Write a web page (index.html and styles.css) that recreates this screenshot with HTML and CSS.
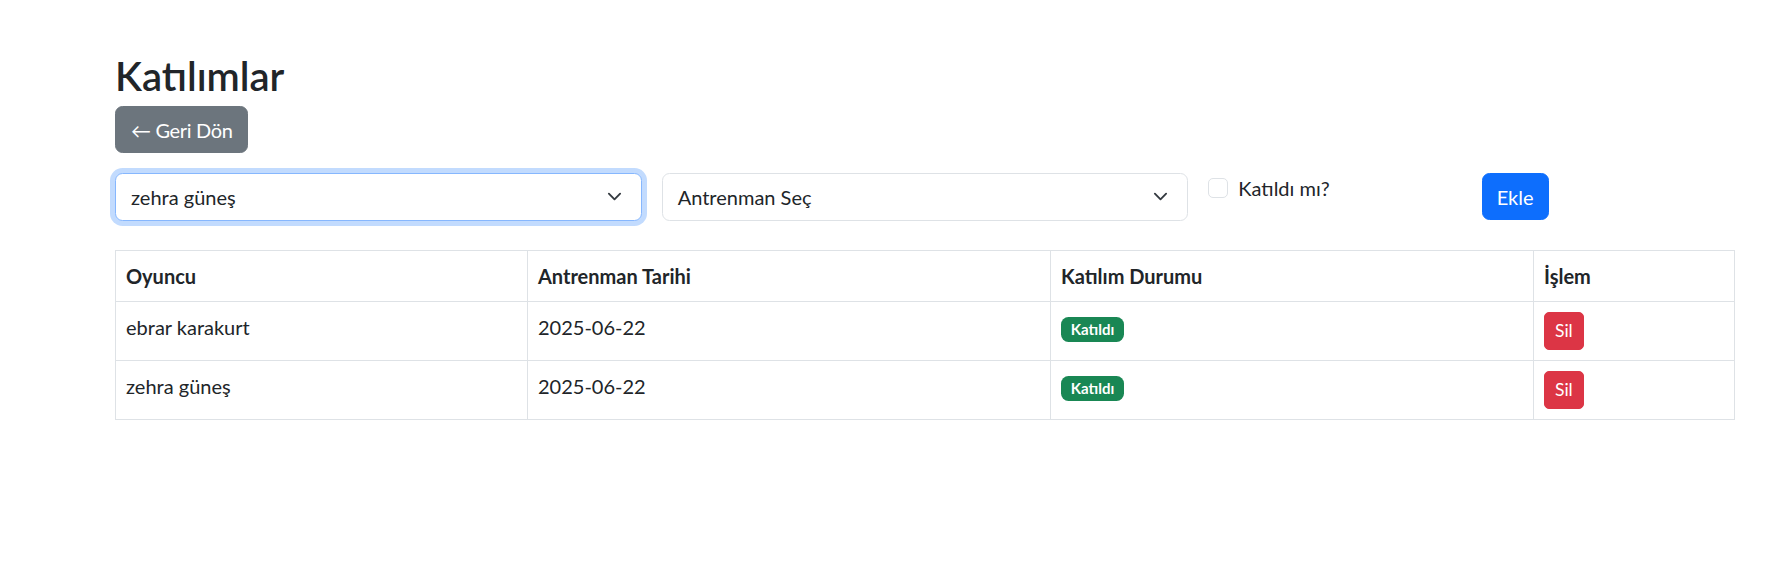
FILE: index.html
```html
<!DOCTYPE html>
<html lang="tr">
<head>
<meta charset="utf-8">
<title>Katılımlar</title>
<link rel="stylesheet" href="styles.css">
</head>
<body>
<div class="page">
  <h2 class="title">Katılımlar</h2>
  <a class="btn btn-secondary" href="#">← Geri Dön</a>

  <div class="form-row">
    <div class="col col-4">
      <div class="select is-focused">
        <span>zehra güneş</span>
        <svg class="chevron" viewBox="0 0 16 16" width="15" height="15"><path fill="none" stroke="#343a40" stroke-linecap="round" stroke-linejoin="round" stroke-width="2" d="m2 5 6 6 6-6"/></svg>
      </div>
    </div>
    <div class="col col-4">
      <div class="select">
        <span>Antrenman Seç</span>
        <svg class="chevron" viewBox="0 0 16 16" width="15" height="15"><path fill="none" stroke="#343a40" stroke-linecap="round" stroke-linejoin="round" stroke-width="2" d="m2 5 6 6 6-6"/></svg>
      </div>
    </div>
    <div class="col col-2">
      <label class="check">
        <span class="check-box"></span>
        <span class="check-label">Katıldı mı?</span>
      </label>
    </div>
    <div class="col col-2">
      <button class="btn btn-primary btn-add" type="button">Ekle</button>
    </div>
  </div>

  <table class="table">
    <thead>
      <tr>
        <th class="w-player">Oyuncu</th>
        <th class="w-date">Antrenman Tarihi</th>
        <th class="w-status">Katılım Durumu</th>
        <th>İşlem</th>
      </tr>
    </thead>
    <tbody>
      <tr>
        <td>ebrar karakurt</td>
        <td>2025-06-22</td>
        <td><span class="badge">Katıldı</span></td>
        <td><button class="btn btn-danger btn-sm" type="button">Sil</button></td>
      </tr>
      <tr>
        <td>zehra güneş</td>
        <td>2025-06-22</td>
        <td><span class="badge">Katıldı</span></td>
        <td><button class="btn btn-danger btn-sm" type="button">Sil</button></td>
      </tr>
    </tbody>
  </table>
</div>
</body>
</html>
```

FILE: styles.css
```css
* {
  box-sizing: border-box;
}

body {
  margin: 0;
  background: #fff;
  color: #212529;
  font-family: Lato, "Noto Sans", "Liberation Sans", sans-serif;
  font-size: 20px;
  line-height: 30px;
}

.page {
  padding: 52px 56px 0 115px;
}

.title {
  margin: 0 0 6px;
  font-size: 40px;
  font-weight: 600;
  line-height: 48px;
}

.btn {
  display: inline-block;
  padding: 7.5px 15px;
  border: 1.25px solid transparent;
  border-radius: 7.5px;
  font-family: inherit;
  font-size: 20px;
  line-height: 30px;
  color: #fff;
  text-decoration: none;
  cursor: pointer;
  vertical-align: middle;
}

.btn-secondary {
  background: #6c757d;
  border-color: #6c757d;
  letter-spacing: -0.35px;
}

.btn-primary {
  background: #0d6efd;
  border-color: #0d6efd;
}

.btn-add {
  padding: 7.5px 14px;
}

.btn-danger {
  background: #dc3545;
  border-color: #dc3545;
}

.btn-sm {
  padding: 5px 10px;
  font-size: 17.5px;
  line-height: 26.25px;
  border-radius: 5px;
}

.form-row {
  display: flex;
  margin: 20px -10px 0;
}

.col {
  padding: 0 10px;
}

.col-4 {
  flex: 0 0 33.3333%;
}

.col-2 {
  flex: 0 0 16.6667%;
}

.select {
  display: flex;
  align-items: center;
  justify-content: space-between;
  height: 47.5px;
  padding: 0 19px 0 15px;
  border: 1.25px solid #dee2e6;
  border-radius: 7.5px;
  background: #fff;
}

.select.is-focused {
  border-color: #86b7fe;
  box-shadow: 0 0 0 5px rgba(13, 110, 253, 0.25);
}

.chevron {
  display: block;
  flex: none;
}

.check {
  display: flex;
  align-items: flex-start;
  gap: 10px;
  min-height: 30px;
}

.check-box {
  flex: none;
  width: 20px;
  height: 20px;
  margin-top: 5px;
  border: 1.25px solid #dee2e6;
  border-radius: 5px;
  background: #fff;
}

.table {
  width: 100%;
  margin-top: 29px;
  border-collapse: collapse;
  table-layout: fixed;
  border: 1px solid #dee2e6;
}

.table th,
.table td {
  padding: 10px;
  border: 1px solid #dee2e6;
  text-align: left;
  vertical-align: top;
}

.table th {
  font-weight: 700;
}

.w-player {
  width: 412px;
}

.w-date {
  width: 523px;
}

.w-status {
  width: 483px;
}

.badge {
  display: inline-block;
  padding: 5px 9.75px;
  border-radius: 7.5px;
  background: #198754;
  color: #fff;
  font-size: 15px;
  font-weight: 700;
  line-height: 1;
  vertical-align: baseline;
}
```
